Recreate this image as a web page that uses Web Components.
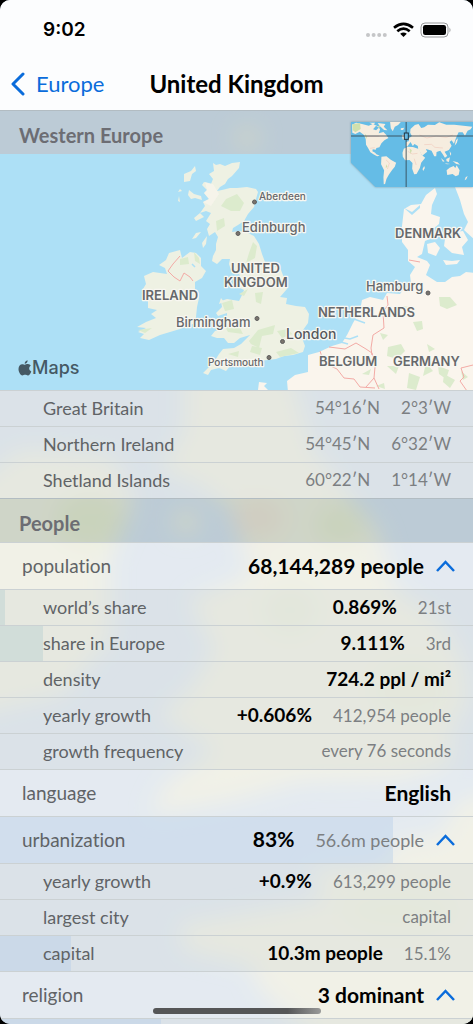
<!DOCTYPE html>
<html lang="en">
<head>
<meta charset="utf-8">
<meta name="viewport" content="width=device-width, initial-scale=1">
<title>United Kingdom</title>
<style>
    body {
        margin: 0;
        background: #000;
        font-family: Lato, "Open Sans", sans-serif;
        font-variant-ligatures: none;
        color: #000;
    }
</style>
</head>
<body>

<atlas-screen>
    <status-bar slot="top" time="9:02"></status-bar>
    <nav-bar slot="top">
        <span slot="back">Europe</span>
        United Kingdom
    </nav-bar>

    <section-title>Western Europe</section-title>
    <region-map></region-map>
    <data-row sub>Great Britain<span slot="note">54°16′N</span><span slot="note">2°3′W</span></data-row>
    <data-row sub>Northern Ireland<span slot="note">54°45′N</span><span slot="note">6°32′W</span></data-row>
    <data-row sub>Shetland Islands<span slot="note">60°22′N</span><span slot="note">1°14′W</span></data-row>

    <section-title>People</section-title>
    <data-row open>population<span slot="value">68,144,289 people</span></data-row>
    <data-row sub share="1" tint="green">world’s share<span slot="value">0.869%</span><span slot="note">21st</span></data-row>
    <data-row sub share="9.111" tint="green">share in Europe<span slot="value">9.111%</span><span slot="note">3rd</span></data-row>
    <data-row sub>density<span slot="value">724.2 ppl / mi²</span></data-row>
    <data-row sub>yearly growth<span slot="value">+0.606%</span><span slot="note">412,954 people</span></data-row>
    <data-row sub>growth frequency<span slot="note">every 76 seconds</span></data-row>
    <data-row>language<span slot="value">English</span></data-row>
    <data-row open share="83">urbanization<span slot="value">83%</span><span slot="note">56.6m people</span></data-row>
    <data-row sub>yearly growth<span slot="value">+0.9%</span><span slot="note">613,299 people</span></data-row>
    <data-row sub>largest city<span slot="note">capital</span></data-row>
    <data-row sub share="15.1">capital<span slot="value">10.3m people</span><span slot="note">15.1%</span></data-row>
    <data-row open>religion<span slot="value">3 dominant</span></data-row>
    <data-row sub share="34"></data-row>
</atlas-screen>

<script>
const screenTemplate = `
<style>
    :host {
        position: relative;
        display: flex;
        flex-direction: column;
        height: 100vh;
        overflow: hidden;
        border-radius: 10px;
        background: #c5d8e8;
    }

    /* out of focus map behind the list */
    .backdrop {
        position: absolute;
        inset: 0;
        width: 100%;
        height: 100%;
    }

    header {
        position: relative;
        background: #fcfdfe;
    }

    main {
        position: relative;
        flex: 1;
        min-height: 0;
        overflow-y: auto;
        scrollbar-width: none;
    }

    .home {
        position: absolute;
        bottom: 10px;
        left: 50%;
        width: 168px;
        height: 6px;
        margin-left: -84px;
        border-radius: 3px;
        background: linear-gradient(90deg, #555657 80%, #999a99);
    }
</style>
<svg class="backdrop" viewBox="0 0 473 1024" preserveAspectRatio="none" aria-hidden="true">
    <defs><filter id="soft" x="-20%" y="-20%" width="140%" height="140%"><feGaussianBlur stdDeviation="11"/></filter></defs>
    <g filter="url(#soft)" fill="#e5e8d0">
        <path d="M185 370 L290 370 L312 450 L345 490 L378 530 L395 590 L440 620 L462 660 L468 700 L450 730 L450 765 L400 780 L300 782 L235 800 L150 815 L165 785 L215 750 L160 715 L190 690 L215 650 L190 600 L250 575 L232 510 L200 485 L160 470 L185 430Z"/>
        <path d="M-30 490 L20 450 L110 455 L135 500 L110 560 L110 640 L60 695 L-30 715Z"/>
        <path d="M510 790 L460 800 L440 835 L395 840 L385 865 L310 870 L325 900 L180 925 L185 950 L250 965 L260 990 L340 1060 L510 1060Z"/>
        <ellipse cx="186" cy="522" rx="12" ry="12"/>
        <ellipse cx="247" cy="138" rx="12" ry="10"/>
        <g opacity="0.5">
            <ellipse cx="90" cy="520" rx="35" ry="28" fill="#d2e2ab"/>
            <ellipse cx="258" cy="518" rx="26" ry="20" fill="#e9d0bc"/>
            <ellipse cx="340" cy="525" rx="25" ry="20" fill="#d2e2ab"/>
            <ellipse cx="290" cy="610" rx="30" ry="26" fill="#d3e4bd"/>
            <ellipse cx="410" cy="690" rx="40" ry="30" fill="#d9e6bd"/>
            <ellipse cx="400" cy="910" rx="60" ry="25" fill="#dce8bf"/>
        </g>
    </g>
</svg>
<header><slot name="top"></slot></header>
<main><slot></slot></main>
<div class="home"></div>
`;

class AtlasScreen extends HTMLElement {
    constructor() {
        super();
        this.attachShadow({ mode: 'open' });
        this.shadowRoot.innerHTML = screenTemplate;
    }
}

const statusTemplate = `
<style>
    :host {
        display: flex;
        align-items: center;
        justify-content: space-between;
        height: 60px;
        padding: 0 22px 0 43px;
        font: 600 19px/24px Inter, sans-serif;
    }

    svg {
        display: block;
        width: 86px;
        height: 18px;
    }
</style>
<span id="time"></span>
<svg viewBox="0 0 86 18" aria-label="Wi-Fi on, battery full" role="img">
    <g fill="#c5c6c8">
        <circle cx="3" cy="14" r="2"/><circle cx="8.600" cy="14" r="2"/><circle cx="14.200" cy="14" r="2"/><circle cx="19.800" cy="14" r="2"/>
    </g>
    <g fill="none" stroke="#000" stroke-width="2.700">
        <path d="M29 6.700 Q38.500 -1 48 6.700"/>
        <path d="M32.300 10.200 Q38.500 5 44.700 10.200"/>
    </g>
    <path d="M35.200 12.800 Q38.500 10.200 41.800 12.800 L38.500 16Z"/>
    <rect x="56" y="2" width="27" height="14" rx="4" fill="none" stroke="#98999b"/>
    <rect x="58" y="4" width="23" height="10" rx="2.200"/>
    <path d="M84.500 6.500 Q86.500 9 84.500 11.500Z" fill="#98999b"/>
</svg>
`;

class StatusBar extends HTMLElement {
    constructor() {
        super();
        this.attachShadow({ mode: 'open' });
        this.shadowRoot.innerHTML = statusTemplate;
    }

    connectedCallback() {
        this.shadowRoot.querySelector('#time').textContent = this.getAttribute('time');
    }
}

const navTemplate = `
<style>
    :host {
        display: grid;
        grid-template-columns: 1fr auto 1fr;
        align-items: center;
        box-sizing: border-box;
        height: 50px;
        padding: 0 11px 3px;
    }

    a {
        display: flex;
        align-items: center;
        gap: 11px;
        color: #0a6cdb;
        font-size: 22px;
        line-height: 28px;
        text-decoration: none;
    }

    h1 {
        margin: 0;
        font-size: 24px;
        font-weight: 700;
        line-height: 30px;
    }
</style>
<a href="#europe">
    <svg width="14" height="24" viewBox="0 0 14 24" fill="none" stroke="currentColor" stroke-width="3" stroke-linecap="round" stroke-linejoin="round" aria-hidden="true"><path d="M12 2 L2 12 L12 22"/></svg>
    <slot name="back"></slot>
</a>
<h1><slot></slot></h1>
`;

class NavBar extends HTMLElement {
    constructor() {
        super();
        this.attachShadow({ mode: 'open' });
        this.shadowRoot.innerHTML = navTemplate;
    }
}

const sectionTemplate = `
<style>
    :host {
        display: block;
        box-sizing: border-box;
        height: 44px;
        padding: 0 19px;
        border-top: 1px solid #b2bcc2;
        background: rgba(175, 186, 188, 0.4);
    }

    h2 {
        margin: 0;
        padding: 8px 0;
        color: #6c6d73;
        font-size: 20px;
        font-weight: 700;
        line-height: 32px;
    }
</style>
<h2><slot></slot></h2>
`;

class SectionTitle extends HTMLElement {
    constructor() {
        super();
        this.attachShadow({ mode: 'open' });
        this.shadowRoot.innerHTML = sectionTemplate;
    }
}

const mapTemplate = `
<style>
    :host {
        position: relative;
        display: block;
        background: #ade0f6;
    }

    .map {
        display: block;
        width: 100%;
        height: 236px;
    }

    .map text {
        font-family: Inter, sans-serif;
        font-weight: 500;
        fill: #66686b;
        stroke: #f8f7f1;
        stroke-width: 2.500px;
        stroke-linejoin: round;
        paint-order: stroke;
    }

    .map .country { font-size: 13px; font-weight: 600; }
    .map .capital { font-size: 14px; fill: #56585b; }
    .map .city { font-size: 13px; }
    .map .town { font-size: 10px; }

    .world {
        position: absolute;
        top: -32px;
        right: 0;
        width: 122px;
        height: 65px;
        filter: drop-shadow(0 0 1px #7d98a5);
    }

    .brand {
        position: absolute;
        left: 18px;
        bottom: 10px;
        display: flex;
        align-items: center;
        color: #455964;
        font: 500 18px/24px Inter, sans-serif;
    }
</style>
<svg class="map" viewBox="0 154 473 236" preserveAspectRatio="xMidYMid slice">
    <g fill="#eef1e3">
        <path d="M213 163 L216 165 L220 164 L225 166 L232 163 L240 162 L239 168 L232 176 L228 179 L225 184 L220 187 L217 191 L222 190 L230 188 L237 188 L247 187 L256 189 L258 192 L256 199 L254 207 L248 214 L244 221 L238 225 L233 228 L232 232 L240 231 L248 233 L254 236 L259 244 L262 254 L265 262 L272 264 L281 270 L284 278 L287 289 L280 297 L287 298 L286 304 L296 306 L305 307 L309 314 L308 323 L303 330 L296 334 L302 338 L305 346 L303 352 L293 355 L284 356 L276 359 L268 360 L258 361 L247 360 L239 363 L232 364 L226 371 L219 368 L211 370 L208 375 L203 373 L208 368 L214 362 L219 354 L223 349 L234 348 L241 344 L250 335 L240 338 L234 343 L228 343 L224 338 L217 338 L211 336 L215 331 L223 329 L227 321 L227 313 L218 316 L216 313 L222 307 L221 301 L227 299 L239 301 L242 295 L244 290 L240 288 L243 281 L239 274 L232 273 L229 264 L230 259 L222 259 L217 264 L212 261 L213 256 L216 250 L216 244 L218 237 L215 232 L209 236 L207 229 L210 224 L206 221 L211 213 L206 211 L200 213 L205 206 L203 202 L209 199 L204 193 L207 190 L202 185 L204 182 L211 184 L213 179 L209 174 L214 171Z"/>
        <path d="M180 250 L169 253 L166 260 L159 265 L165 268 L167 274 L153 272 L144 276 L146 284 L143 289 L146 293 L142 298 L148 301 L148 308 L157 310 L151 314 L156 318 L146 322 L137 327 L146 328 L138 332 L144 334 L140 338 L149 340 L160 335 L170 332 L180 329 L186 326 L193 324 L196 317 L197 307 L199 298 L195 289 L195 282 L202 278 L206 271 L201 266 L201 258 L196 253 L190 252 L182 258Z"/>
        <path d="M195 166 L191 171 L184 174 L184 182 L190 181 L192 174 L196 171Z M189 190 L194 194 L201 196 L202 200 L195 198 L191 199 L188 195Z M180 189 L182 191 L178 192Z M179 196 L180 202 L178 201Z M200 213 L204 217 L196 221 L194 218Z M201 232 L196 238 L192 239 L196 233Z M207 236 L206 244 L203 248 L202 243Z M221 298 L224 302 L219 304Z"/>
    </g>
    <g fill="#faf5ed">
        <path d="M205 182 L213 184 L219 194 L211 206 L203 202 L209 199 L204 193 L207 190Z" opacity=".7"/>
        <path d="M288 392 L287 381 L295 375 L308 372 L308 355 L319 352 L332 346 L342 343 L347 335 L353 323 L360 311 L362 300 L370 297 L383 300 L387 293 L400 294 L403 290 L411 292 L411 283 L410 275 L415 267 L408 261 L408 250 L402 242 L402 226 L404 209 L411 205 L421 204 L426 195 L435 188 L437 194 L432 205 L431 214 L440 217 L439 224 L433 229 L432 238 L425 241 L422 254 L417 257 L427 261 L430 265 L426 275 L437 282 L445 282 L452 277 L460 276 L466 272 L475 273 L475 392Z"/>
        <path d="M455 187 L460 200 L464 214 L468 222 L464 230 L475 240 L475 187Z M427 244 L435 242 L440 248 L436 256 L428 253Z M446 232 L452 238 L455 232 L463 231 L468 240 L462 247 L464 255 L452 253 L444 246Z M443 260 L452 261 L460 260 L457 264 L446 265Z M259 382 L267 383 L264 386 L268 390 L258 390Z"/>
        <path d="M404 208 L412 212 L420 205 L420 208 L412 215Z" fill="#ade0f6"/>
    </g>
    <g fill="#dcebcd">
        <path d="M226 199 L237 194 L244 203 L240 211 L231 211 L221 206Z M216 221 L224 218 L225 226 L217 231Z M253 242 L257 246 L255 258 L246 263 L249 253Z M180 259 L188 257 L189 264 L180 265Z M194 252 L199 258 L200 264 L195 261Z M222 303 L232 300 L234 309 L225 311Z M239 294 L248 289 L244 296Z M255 293 L263 292 L261 304 L256 302Z M224 325 L240 328 L243 334 L228 332Z M249 341 L258 330 L275 325 L273 334 L262 336 L259 348 L251 344Z M252 346 L262 348 L260 355 L250 352Z M277 331 L288 329 L292 334 L282 338Z M276 352 L291 348 L299 353 L280 357Z M228 354 L239 351 L238 357Z M138 330 L152 328 L145 333Z"/>
        <path d="M439 297 L450 297 L457 305 L447 309 L440 306Z M413 322 L422 321 L423 329 L417 331Z M380 333 L388 335 L383 340Z M388 347 L401 344 L405 351 L397 359 L387 356Z M427 344 L435 349 L429 352Z M438 366 L449 370 L446 379 L439 374Z M409 373 L420 377 L416 390 L407 388Z M444 374 L455 380 L450 388 L443 382Z M426 363 L433 371 L423 376Z M362 374 L371 369 L369 375Z M461 371 L468 377 L463 380Z M376 386 L384 383 L385 389Z M402 306 L411 307 L407 310Z M387 366 L399 366 L396 374Z"/>
    </g>
    <g fill="none" stroke="#f3aba6" stroke-width="1">
        <path d="M180 256 L173 264 L168 271 L174 277 L180 281 L184 273 L190 277 L193 281"/>
        <path d="M409 260 L420 262 M387 296 L388 305 L383 312 L384 328 L373 335 L371 348 L372 355 M320 351 L324 363 L337 369 L344 378 L354 379 L360 387 L375 388 M329 347 L345 349 L356 343 L366 349 L372 353 L375 367 L374 378 L366 387 M374 378 L379 389 M473 365 L461 368 L464 377 L460 381 L467 391"/>
    </g>
    <g fill="none" stroke="#ade0f6" stroke-width="1.500">
        <path d="M339 337 L350 339 L358 336 M337 341 L348 344 M354 319 L365 323 M192 264 L195 267"/>
    </g>
    <g fill="#79736c" stroke="#5d5d5d">
        <circle cx="254.500" cy="202" r="2"/><circle cx="238" cy="233.500" r="2"/><circle cx="257" cy="318.500" r="2"/>
        <circle cx="282.500" cy="341.500" r="2"/><circle cx="269" cy="357.500" r="2"/><circle cx="428" cy="293" r="2"/>
    </g>
    <text class="town" x="259" y="200">Aberdeen</text>
    <text class="city" x="242" y="232">Edinburgh</text>
    <text class="country" x="231" y="273">UNITED</text>
    <text class="country" x="224" y="287">KINGDOM</text>
    <text class="country" x="142" y="300">IRELAND</text>
    <text class="city" x="176" y="327">Birmingham</text>
    <text class="capital" x="286" y="339">London</text>
    <text class="town" x="208" y="366">Portsmouth</text>
    <text class="country" x="395" y="238">DENMARK</text>
    <text class="city" x="366" y="291">Hamburg</text>
    <text class="country" x="318" y="317">NETHERLANDS</text>
    <text class="country" x="319" y="366">BELGIUM</text>
    <text class="country" x="393" y="366">GERMANY</text>
</svg>
<div class="brand">
    <svg width="14" height="16" viewBox="0 0 14 16" fill="currentColor" aria-hidden="true"><path d="M9.600 0.200 C9.700 2.300 8.300 3.700 6.700 3.800 C6.500 1.900 8 0.400 9.600 0.200Z M6.900 4.800 C7.600 4.800 8.600 4 10 4.100 C11.200 4.200 12.200 4.700 12.800 5.600 C10.400 7.100 10.800 10.400 13.300 11.400 C12.600 13.200 11.300 15.400 9.900 15.400 C8.800 15.400 8.400 14.700 7.100 14.700 C5.800 14.700 5.400 15.400 4.300 15.400 C2.500 15.400 0.500 12 0.500 9 C0.500 6 2.300 4.200 4.200 4.200 C5.400 4.200 6.200 4.800 6.900 4.800Z"/></svg>
    <span>Maps</span>
</div>
<svg class="world" viewBox="175 36 365 195" preserveAspectRatio="none" role="img" aria-label="World map">
    <path d="M175 36 H540 V231 H248 L175 158Z" fill="#65bce6"/>
    <g fill="#f6eddf">
        <path d="M178 44 L190 38 L208 42 L228 47 L240 42 L254 48 L262 58 L258 70 L272 66 L280 74 L287 84 L275 91 L266 100 L260 112 L251 114 L249 119 L240 118 L239 124 L247 128 L251 133 L261 137 L253 139 L242 133 L233 127 L226 114 L220 104 L219 87 L214 75 L201 65 L188 72 L179 68Z"/>
        <path d="M230 38 L247 38 L243 44Z M255 39 L278 42 L273 50 L284 61 L274 60 L260 47Z M292 36 L324 36 L316 45 L306 50 L300 64 L294 55Z M324 55 L334 53 L331 60 L324 60Z"/>
        <path d="M266 140 L281 139 L294 149 L310 158 L306 170 L298 180 L288 194 L281 207 L277 222 L273 223 L272 202 L274 181 L265 163Z"/>
        <path d="M333 116 L344 110 L360 111 L378 117 L387 135 L397 143 L385 158 L381 174 L371 192 L364 193 L358 176 L359 159 L350 150 L337 151 L330 140 L329 128Z M394 168 L396 174 L391 183 L389 177Z"/>
        <path d="M339 110 L340 96 L349 93 L346 87 L357 78 L352 68 L353 57 L366 45 L377 42 L385 54 L394 52 L405 44 L426 45 L439 37 L460 44 L484 44 L511 47 L538 50 L533 58 L524 62 L516 77 L509 67 L497 67 L490 82 L486 92 L483 101 L476 91 L470 96 L476 107 L468 120 L455 125 L463 138 L456 143 L449 132 L442 122 L431 126 L430 139 L424 139 L416 122 L407 119 L399 117 L403 125 L388 137 L376 117 L375 108 L365 102 L360 108 L353 96 L344 109Z"/>
        <path d="M327 75 L334 74 L337 87 L330 89Z M489 91 L495 85 L492 98 L485 107Z M444 144 L455 154 L450 155Z M460 147 L471 142 L468 156 L461 154Z M455 160 L472 162 L462 163Z M479 153 L494 157 L501 164 L489 161Z M461 181 L470 173 L482 168 L487 174 L491 166 L500 181 L497 195 L488 199 L479 192 L463 195Z M518 202 L524 198 L520 208 L515 211Z M470 122 L475 132 L472 137Z"/>
    </g>
    <path d="M179 43 L202 39 L204 57 L188 67 L180 60Z M255 49 L262 46 L259 56Z M216 70 L223 80 L220 88Z M280 163 L284 170 L279 174Z M350 115 L357 121 L353 133Z" fill="#cfe0ad"/>
    <g fill="none" stroke="#efc0b2" stroke-width="1.500">
        <path d="M220 79 H260 M232 115 L246 113 M280 150 L290 159 L284 177 M345 124 L359 132 L374 130 M364 146 L370 165 M380 75 L402 84 L430 78 L460 82 L480 75 M394 104 L416 103 L426 112 L450 114"/>
    </g>
    <path d="M175 78 H334 M348 78 H540 M340 36 V69 M340 88 V231" fill="none" stroke="#31424d" stroke-width="2.500"/>
    <rect x="334.500" y="69" width="12" height="19" fill="#67b9e4" stroke="#1f3340" stroke-width="3"/>
    <path d="M250 47 L258 53 L250 61 L241 58Z" fill="#65bce6"/>
</svg>
`;

class RegionMap extends HTMLElement {
    constructor() {
        super();
        this.attachShadow({ mode: 'open' });
        this.shadowRoot.innerHTML = mapTemplate;
    }
}

const rowTemplate = `
<style>
    :host {
        position: relative;
        display: flex;
        align-items: center;
        box-sizing: border-box;
        height: 47px;
        padding: 0 22px 1px;
        border-top: 1px solid #cbd1d3;
        background: rgba(248, 247, 246, 0.6);
        color: #606366;
        font-size: 19px;
        line-height: 24px;
    }

    :host([sub]) {
        height: 36px;
        padding-left: 43px;
        background: rgba(231, 232, 232, 0.65);
        font-size: 18px;
    }

    :host([open]) {
        padding-right: 18px;
    }

    /* share of the whole, drawn behind the texts */
    #bar {
        position: absolute;
        top: 0;
        bottom: 0;
        left: 0;
        background: rgba(180, 206, 232, 0.4);
    }

    :host([tint="green"]) #bar {
        background: rgba(178, 205, 208, 0.4);
    }

    .label {
        position: relative;
        flex: 1;
    }

    .data {
        position: relative;
        display: flex;
        align-items: baseline;
        gap: 21px;
    }

    ::slotted([slot="value"]) {
        color: #000;
        font-size: 21px;
        font-weight: 700;
    }

    ::slotted([slot="note"]) {
        color: #7c7f82;
        font-size: 18px;
    }

    :host([sub]) ::slotted([slot="value"]) {
        font-size: 19px;
    }

    :host([sub]) ::slotted([slot="note"]) {
        font-size: 17px;
    }

    button {
        position: relative;
        display: none;
        margin: 0 0 0 12px;
        padding: 0;
        border: 0;
        background: none;
        color: #0a6cdb;
        cursor: pointer;
    }

    :host([open]) button {
        display: block;
    }

    button[aria-expanded="false"] svg {
        transform: rotate(180deg);
    }

    button svg {
        display: block;
    }
</style>
<div id="bar"></div>
<span class="label"><slot></slot></span>
<span class="data"><slot name="value"></slot><slot name="note"></slot></span>
<button type="button" aria-expanded="true" aria-label="Toggle details">
    <svg width="19" height="12" viewBox="0 0 19 12" fill="none" stroke="currentColor" stroke-width="2.500" aria-hidden="true"><path d="M1 11 L9.500 2 L18 11"/></svg>
</button>
`;

class DataRow extends HTMLElement {
    constructor() {
        super();
        this.attachShadow({ mode: 'open' });
        this.shadowRoot.innerHTML = rowTemplate;
        this.shadowRoot.querySelector('button').addEventListener('click', this._toggle.bind(this));
    }

    connectedCallback() {
        const share = this.getAttribute('share') || 0;
        this.shadowRoot.querySelector('#bar').style.width = share + '%';
    }

    // hide or show the sub rows that follow this one
    _toggle() {
        const button = this.shadowRoot.querySelector('button');
        const expand = button.getAttribute('aria-expanded') === 'false';
        button.setAttribute('aria-expanded', expand);
        let row = this.nextElementSibling;
        while(row && row.hasAttribute('sub')) {
            row.style.display = expand ? '' : 'none';
            row = row.nextElementSibling;
        }
    }
}

customElements.define('atlas-screen', AtlasScreen);
customElements.define('status-bar', StatusBar);
customElements.define('nav-bar', NavBar);
customElements.define('section-title', SectionTitle);
customElements.define('region-map', RegionMap);
customElements.define('data-row', DataRow);
</script>
</body>
</html>
